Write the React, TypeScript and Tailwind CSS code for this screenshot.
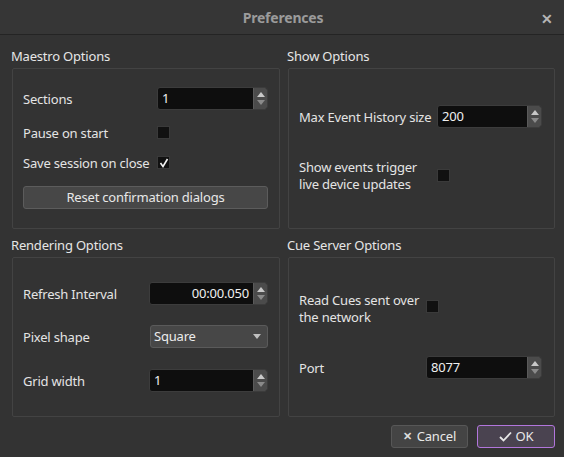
import React from "react";

const font = "font-['Noto_Sans','Liberation_Sans',sans-serif]";

function SpinBox({ value, width, right }: { value: string; width: string; right?: boolean }) {
  return (
    <div className={`${width} h-[23px] flex rounded-[3px] border border-[#3c3c3c] bg-[#0e0e0e] overflow-hidden`}>
      <div className={`flex-1 flex items-center px-[4px] text-[#f0f0f0] ${right ? "justify-end" : ""}`}>
        {value}
      </div>
      <div className="w-[14px] bg-[#4b4b4b] border-l border-[#5a5a5a] flex flex-col items-center justify-center gap-[3px]">
        <svg width="8" height="5" viewBox="0 0 8 5">
          <path d="M0 5 L4 0 L8 5 Z" fill="#c8c8c8" />
        </svg>
        <svg width="8" height="5" viewBox="0 0 8 5">
          <path d="M0 0 L4 5 L8 0 Z" fill="#8a8a8a" />
        </svg>
      </div>
    </div>
  );
}

function CheckBox({ checked }: { checked?: boolean }) {
  return (
    <div className="w-[13px] h-[13px] bg-[#111111] border border-[#3a3a3a] flex items-center justify-center">
      {checked && (
        <svg width="10" height="10" viewBox="0 0 10 10">
          <path d="M1.5 5 L4 8.5 L8.5 1" stroke="#f2f2f2" strokeWidth="1.6" fill="none" />
        </svg>
      )}
    </div>
  );
}

function Row({ label, children, className }: { label: React.ReactNode; children: React.ReactNode; className: string }) {
  return (
    <div className={`flex items-center ${className}`}>
      <div className="flex-1 text-[#e4e4e4] leading-[17px] pt-[1px]">{label}</div>
      {children}
    </div>
  );
}

function Group({ title, children, h, className }: { title: string; children: React.ReactNode; h: string; className?: string }) {
  return (
    <div className={className}>
      <div className="h-[20px] leading-[17px] text-[#e6e6e6] -ml-px">{title}</div>
      <div className={`${h} border border-[#434343] rounded-[2px] flex flex-col`}>{children}</div>
    </div>
  );
}

export default function App() {
  return (
    <div className={`w-[564px] h-[457px] bg-[#333333] flex flex-col text-[13px] tracking-[-0.2px] ${font}`}>
      <div className="h-[35px] shrink-0 bg-[#363636] border-b border-[#242424] relative flex items-center justify-center">
        <span className="text-[14px] font-bold text-[#9b9b9b] ml-[2px]">Preferences</span>
        <span className="absolute right-[11px] top-[8px] text-[#b5b5b5] font-bold text-[14px]">✕</span>
      </div>

      <div className="flex gap-[8px] pl-[12px] pt-[13px]">
        <div className="w-[268px] flex flex-col">
          <Group title="Maestro Options" h="h-[161px]">
            <div className="pt-[18px] pl-[10px] pr-[11px] flex flex-col">
              <Row label="Sections" className="h-[23px]">
                <SpinBox value="1" width="w-[111px]" />
              </Row>
              <Row label="Pause on start" className="h-[23px] mt-[11px]">
                <div className="w-[111px]">
                  <CheckBox />
                </div>
              </Row>
              <Row label="Save session on close" className="h-[23px] mt-[7px]">
                <div className="w-[111px]">
                  <CheckBox checked />
                </div>
              </Row>
              <button className="mt-[12px] h-[23px] bg-[#474747] border border-[#5c5c5c] rounded-[3px] text-[#e8e8e8]">
                Reset confirmation dialogs
              </button>
            </div>
          </Group>
          <Group title="Rendering Options" h="h-[160px]" className="mt-[8px]">
            <div className="pt-[24px] pl-[10px] pr-[11px] flex flex-col">
              <Row label="Refresh Interval" className="h-[23px]">
                <SpinBox value="00:00.050" width="w-[119px]" right />
              </Row>
              <Row label="Pixel shape" className="h-[23px] mt-[20px]">
                <div className="w-[118px] h-[23px] bg-[#474747] border border-[#5a5a5a] rounded-[3px] flex items-center pl-[3px] pr-[6px] text-[#ececec]">
                  <span className="flex-1">Square</span>
                  <svg width="8" height="5" viewBox="0 0 8 5">
                    <path d="M0 0 L4 5 L8 0 Z" fill="#c0c0c0" />
                  </svg>
                </div>
              </Row>
              <Row label="Grid width" className="h-[23px] mt-[21px]">
                <SpinBox value="1" width="w-[119px]" />
              </Row>
            </div>
          </Group>
        </div>

        <div className="w-[267px] flex flex-col">
          <Group title="Show Options" h="h-[161px]">
            <div className="pt-[36px] pl-[10px] pr-[12px] flex flex-col">
              <Row label="Max Event History size" className="h-[23px]">
                <SpinBox value="200" width="w-[105px]" />
              </Row>
              <Row
                label={
                  <>
                    <div>Show events trigger</div>
                    <div>live device updates</div>
                  </>
                }
                className="h-[34px] mt-[30px]"
              >
                <div className="w-[105px]">
                  <CheckBox />
                </div>
              </Row>
            </div>
          </Group>
          <Group title="Cue Server Options" h="h-[160px]" className="mt-[8px]">
            <div className="pt-[33px] pl-[10px] pr-[12px] flex flex-col">
              <Row
                label={
                  <>
                    <div>Read Cues sent over</div>
                    <div>the network</div>
                  </>
                }
                className="h-[34px]"
              >
                <div className="w-[116px] -mt-[3px]">
                  <CheckBox />
                </div>
              </Row>
              <Row label="Port" className="h-[23px] mt-[31px]">
                <SpinBox value="8077" width="w-[116px]" />
              </Row>
            </div>
          </Group>
          <div className="flex justify-end gap-[9px] mt-[8px]">
            <button className="w-[77px] h-[23px] bg-[#444444] border border-[#575757] rounded-[3px] text-[#e8e8e8] flex items-center justify-center gap-[5px]">
              <span className="text-[11px] font-bold text-[#dcdcdc]">✕</span>
              Cancel
            </button>
            <button className="w-[78px] h-[23px] bg-[#4a4350] border border-[#b276dc] rounded-[3px] text-[#e8e8e8] flex items-center justify-center gap-[4px]">
              <svg width="13" height="11" viewBox="0 0 13 11">
                <path d="M1 6 L4.5 9.5 L12 1.5" stroke="#e6e6e6" strokeWidth="1.8" fill="none" />
              </svg>
              OK
            </button>
          </div>
        </div>
      </div>
    </div>
  );
}
